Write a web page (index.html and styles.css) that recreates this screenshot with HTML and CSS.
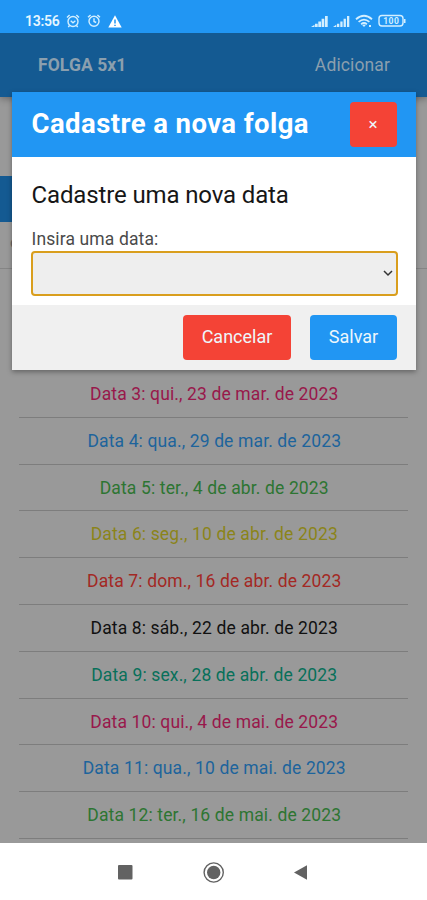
FILE: index.html
```
<!DOCTYPE html>
<html lang="pt-BR">
<head>
<meta charset="utf-8">
<title>Folga 5x1</title>
<link rel="stylesheet" href="styles.css">
</head>
<body>
<div class="screen">
  <header class="status">
    <div class="status-left">
      <span class="clock">13:56</span>
      <svg class="alarm" width="14" height="14" viewBox="0 0 14 14"><circle cx="7" cy="7.5" r="5"/><path d="M1 3.5 3.6 1M13 3.5 10.4 1M4.7 6.8 7 8.8 9.4 6.8M3.5 11.5l-1.2 1.6M10.500 11.500l1.200 1.600"/></svg>
      <svg class="alarm second" width="14" height="14" viewBox="0 0 14 14"><circle cx="7" cy="7.200" r="5"/><path d="M1 3.300 3.600 1M13 3.300 10.400 1M7 4.200V7.500L9.200 8.500"/></svg>
      <svg class="warn" width="14" height="13" viewBox="0 0 14 13"><path class="solid" d="M7 .3 13.700 12.500H.3z"/><path class="mark" d="M7 4.500V8.500M7 9.700V11"/></svg>
    </div>
    <div class="status-right">
      <svg width="17" height="13" viewBox="0 0 17 13"><path class="solid" d="M0 12 3.500 9.700V12zM4 8.700h2.700V12H4zM7.300 6.500H10V12H7.300zM10.600 3.800h2.700V12h-2.700zM14 1h2.700v11H14z"/></svg>
      <svg class="signal2" width="17" height="13" viewBox="0 0 17 13"><path class="solid" d="M0 12 3.300 9.700V12zM4 8.700h2.300V12H4zM7.300 6.500h2.300V12H7.300zM10.600 3.800h2.300V12h-2.300zM14 1h2.300v11H14z"/></svg>
      <svg class="wifi" width="18" height="14" viewBox="0 0 18 14"><path d="M1 5.200Q9-1.800 17 5.200M3.600 7.900Q9 3.300 14.400 7.900M6.100 10.200Q9 7.900 11.900 10.200"/><path class="solid" d="M7.200 11 9 13l1.800-2Q9 9.800 7.200 11zM14 11h2v2h-2z"/></svg>
      <svg class="battery" width="29" height="14" viewBox="0 0 29 14"><rect x="1" y="1.500" width="24" height="10.500" rx="3"/><path class="solid" d="M26 5h1.500v4H26z"/><text x="13.200" y="10" text-anchor="middle">100</text></svg>
    </div>
  </header>
  <main class="app">
    <nav class="topbar"><b class="brand">FOLGA 5x1</b><span class="add">Adicionar</span></nav>
    <section class="tabs"><span class="tab"></span></section>
    <section class="caption">c</section>
    <ul class="dates">
      <li class="pink">Data 3: qui., 23 de mar. de 2023</li>
      <li class="blue">Data 4: qua., 29 de mar. de 2023</li>
      <li class="green">Data 5: ter., 4 de abr. de 2023</li>
      <li class="yellow">Data 6: seg., 10 de abr. de 2023</li>
      <li class="red">Data 7: dom., 16 de abr. de 2023</li>
      <li class="black">Data 8: sáb., 22 de abr. de 2023</li>
      <li class="teal">Data 9: sex., 28 de abr. de 2023</li>
      <li class="pink">Data 10: qui., 4 de mai. de 2023</li>
      <li class="blue">Data 11: qua., 10 de mai. de 2023</li>
      <li class="green">Data 12: ter., 16 de mai. de 2023</li>
    </ul>
    <div class="dialog">
      <div class="dialog-head"><h1>Cadastre a nova folga</h1><button class="btn danger close">×</button></div>
      <div class="dialog-body">
        <h2>Cadastre uma nova data</h2>
        <label>Insira uma data:</label>
        <div class="select"><svg width="10" height="7" viewBox="0 0 10 7"><path d="M1 1 5 5 9 1"/></svg></div>
      </div>
      <div class="dialog-foot"><button class="btn danger cancel">Cancelar</button><button class="btn primary save">Salvar</button></div>
    </div>
  </main>
  <footer class="navbar">
    <svg width="427" height="57" viewBox="0 0 427 57"><rect x="118" y="22" width="14.500" height="14.500" rx="1"/><circle cx="213.700" cy="29.500" r="6.700"/><circle class="ring" cx="213.700" cy="29.500" r="9.600"/><path d="M294 29.500 307 22.300V36.700z"/></svg>
  </footer>
</div>
</body>
</html>
```
FILE: styles.css
```
* { box-sizing: border-box; }
body { margin: 0; font-family: Roboto, sans-serif; }
.screen { width: 427px; height: 900px; display: flex; flex-direction: column; overflow: hidden; }

.status { height: 33px; flex: none; background: #2196f3; color: #e6f6ff; display: flex; justify-content: space-between; padding: 9px 20px 0 25px; }
.status-left, .status-right { display: flex; align-items: center; height: 24px; }
.clock { font-size: 14px; font-weight: 600; width: 34px; letter-spacing: -.25px; white-space: nowrap; }
.status svg { fill: none; stroke: #d3efff; stroke-width: 1.4; display: block; }
.status .solid { fill: #d3efff; stroke: none; }
.status .warn .solid { fill: #fff; }
.status .mark { stroke: #2196f3; stroke-width: 1.5; }
.alarm { margin-left: 7px; }
.warn { margin-left: 7px; }
.signal2 { margin-left: 5px; }
.wifi { margin-left: 5px; }
.wifi path { stroke-width: 1.8; }
.battery { margin-left: 5px; }
.battery text { font-size: 8.5px; font-weight: 700; fill: #d3efff; stroke: none; letter-spacing: .5px; }

.app { position: relative; height: 810px; flex: none; background: #999; overflow: hidden; }
.topbar { height: 64px; background: #145a92; box-shadow: 0 2px 7px rgba(0,0,0,.3); display: flex; align-items: center; justify-content: space-between; padding: 0 37px 0 38px; color: #8b9fae; font-size: 17.5px; }
.brand { font-weight: 700; letter-spacing: .1px; }
.add { font-size: 17.5px; letter-spacing: .12px; }
.tabs { height: 125px; padding-top: 79px; }
.tab { display: block; width: 213px; height: 46px; background: #145a92; }
.caption { height: 47px; border-bottom: 1px solid #858585; padding: 10px 10px; font-size: 17px; color: #666; }
.dates { list-style: none; margin: 0; padding: 102px 19px 0; }
.dates li { height: 46.8px; border-bottom: 1px solid #7d7d7d; text-align: center; font-size: 17.5px; letter-spacing: .13px; line-height: 47.500px; padding-left: 1.5px; white-space: nowrap; }
.pink { color: #98184b; }
.blue { color: #1d649c; }
.green { color: #2d7532; }
.yellow { color: #8b841a; }
.red { color: #a32824; }
.black { color: #111; }
.teal { color: #08705a; }

.dialog { position: absolute; left: 12px; top: 59px; width: 403.5px; height: 277.500px; background: #fff; box-shadow: 0 2px 5px rgba(0,0,0,.35); display: flex; flex-direction: column; }
.dialog-head { height: 65px; background: #2196f3; color: #fff; display: flex; align-items: center; justify-content: space-between; padding: 0 19px; }
h1, h2 { margin: 0; white-space: nowrap; }
h1 { font-size: 27.5px; font-weight: 700; letter-spacing: .43px; line-height: 61px; height: 64px; padding-left: .5px; }
h2 { font-size: 24px; font-weight: 400; letter-spacing: -.13px; line-height: 33px; height: 32px; color: #161616; }
.dialog-body { height: 148px; padding: 22px 18px 0 18.500px; }
.dialog-body h2, .dialog-body label { padding-left: 1px; }
label { display: block; margin-top: 16px; font-size: 17.5px; letter-spacing: .13px; line-height: 24px; height: 24px; color: #4a4a4a; }
.select { height: 45px; border: 2px solid #d99e1d; border-radius: 4px; background: #eee; display: flex; align-items: center; justify-content: flex-end; padding-right: 3px; }
.select svg { fill: none; stroke: #333; stroke-width: 1.5; }
.dialog-foot { flex: 1; background: #f0f0f0; display: flex; align-items: center; justify-content: flex-end; gap: 19px; padding-right: 19px; }
.btn { border: 0; border-radius: 4px; height: 45px; padding: 0 0 2px 1px; color: #eef6fb; font: 400 18px Roboto, sans-serif; }
.danger { background: #f44336; }
.primary { background: #2196f3; }
.close { width: 47px; font-size: 17px; padding-left: 0; }
.cancel { width: 108px; }
.save { width: 87px; }

.navbar { height: 57px; background: #fff; }
.navbar svg { display: block; fill: #626262; }
.navbar .ring { fill: none; stroke: #626262; stroke-width: 1.4; }
```
